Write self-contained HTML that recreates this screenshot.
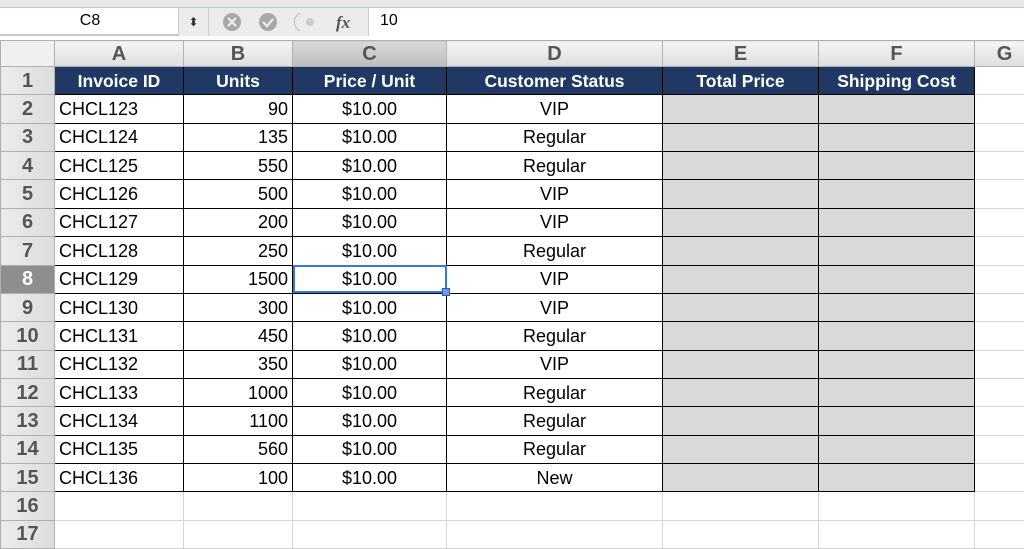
<!DOCTYPE html>
<html><head><meta charset="utf-8"><style>
*{margin:0;padding:0;box-sizing:border-box}
body{width:1024px;height:524px;overflow:hidden;background:#fff;font-family:"Liberation Sans",sans-serif;position:relative}
.top{position:absolute;left:0;top:0;width:1024px;height:8px;background:#e8e8e8;border-bottom:1px solid #b8cbb8}
.fb{position:absolute;left:0;top:8px;width:1024px;height:28px;background:#fff;border-bottom:2px solid #c8c8c8}
.fb .nm{position:absolute;left:60px;top:4px;width:60px;text-align:center;font-size:16px}
.fb .seg{position:absolute;top:0;height:28px;background:#ececec;border-left:1px solid #ccc}
.fb .v{position:absolute;left:380px;top:4px;font-size:16px}
table{position:absolute;left:0;top:40px;width:1034px;border-collapse:collapse;table-layout:fixed}
td{font-size:18px;padding:0 4px;white-space:nowrap;overflow:hidden;border:1px solid #d4d4d4;height:28.36px;line-height:24px}
tr.ch td{height:26px;background:linear-gradient(#f4f4f4,#dedede);border:1px solid #b0b0b0;text-align:center;font-weight:bold;color:#555;font-size:20px}
tr.ch td.sel{background:linear-gradient(#d8d8d8,#bdbdbd)}
td.rh{background:linear-gradient(90deg,#ececec,#dcdcdc);border:1px solid #b0b0b0;text-align:center;font-weight:bold;color:#555;font-size:20px;padding:0}
td.rh.sel{background:#8e8e8e;color:#fff}
tr.h td.d{background:#1f3864;color:#fff;font-weight:bold;text-align:center;border:1px solid #000;height:27px;font-size:17.5px}
td.d{border:1px solid #000}
.r{text-align:right}.c{text-align:center}
td.g{background:#d9d9d9;border:1px solid #000}
td.cur{outline:2px solid #3a78d8;outline-offset:-2px}
.handle{position:absolute;left:442px;top:288px;width:8px;height:8px;background:#6a9ae8;border:1px solid #2a5bb8}
</style></head><body>
<div class="top"></div>
<div class="fb">
<div class="nm">C8</div>
<div class="seg" style="left:178px;width:30px;font-size:12px;text-align:center;line-height:28px;color:#333">⬍</div>
<div class="seg" style="left:208px;width:160px"></div>
<svg style="position:absolute;left:220px;top:4px" width="150" height="22"><circle cx="12" cy="10" r="9" fill="#a8a8a8"/><path d="M8 6l8 8M16 6l-8 8" stroke="#eee" stroke-width="2.2"/><circle cx="48" cy="10" r="9" fill="#a8a8a8"/><path d="M43 10l4 4 6-7" stroke="#eee" stroke-width="2.2" fill="none"/><path d="M80 1a10 10 0 0 0 0 18" stroke="#bbb" fill="none"/><circle cx="90" cy="10" r="4" fill="#ccc"/><text x="116" y="16" font-family="Liberation Serif" font-style="italic" font-weight="bold" font-size="17" fill="#555">fx</text></svg>
<div class="seg" style="left:368px;width:656px;background:#fff"></div>
<div class="v">10</div>
</div>
<table>
<colgroup><col style="width:54px"><col style="width:129px"><col style="width:109px"><col style="width:154px"><col style="width:216px"><col style="width:156px"><col style="width:156px"><col style="width:60px"></colgroup>
<tr class="ch"><td style="background:#f0f0f0"></td><td>A</td><td>B</td><td class="sel">C</td><td>D</td><td>E</td><td>F</td><td>G</td></tr>
<tr class="h"><td class="rh">1</td><td class="d">Invoice ID</td><td class="d">Units</td><td class="d">Price / Unit</td><td class="d">Customer Status</td><td class="d">Total Price</td><td class="d">Shipping Cost</td><td></td></tr>
<tr><td class="rh">2</td><td class="d">CHCL123</td><td class="d r">90</td><td class="d c">$10.00</td><td class="d c">VIP</td><td class="g"></td><td class="g"></td><td></td></tr>
<tr><td class="rh">3</td><td class="d">CHCL124</td><td class="d r">135</td><td class="d c">$10.00</td><td class="d c">Regular</td><td class="g"></td><td class="g"></td><td></td></tr>
<tr><td class="rh">4</td><td class="d">CHCL125</td><td class="d r">550</td><td class="d c">$10.00</td><td class="d c">Regular</td><td class="g"></td><td class="g"></td><td></td></tr>
<tr><td class="rh">5</td><td class="d">CHCL126</td><td class="d r">500</td><td class="d c">$10.00</td><td class="d c">VIP</td><td class="g"></td><td class="g"></td><td></td></tr>
<tr><td class="rh">6</td><td class="d">CHCL127</td><td class="d r">200</td><td class="d c">$10.00</td><td class="d c">VIP</td><td class="g"></td><td class="g"></td><td></td></tr>
<tr><td class="rh">7</td><td class="d">CHCL128</td><td class="d r">250</td><td class="d c">$10.00</td><td class="d c">Regular</td><td class="g"></td><td class="g"></td><td></td></tr>
<tr><td class="rh sel">8</td><td class="d">CHCL129</td><td class="d r">1500</td><td class="d c cur">$10.00</td><td class="d c">VIP</td><td class="g"></td><td class="g"></td><td></td></tr>
<tr><td class="rh">9</td><td class="d">CHCL130</td><td class="d r">300</td><td class="d c">$10.00</td><td class="d c">VIP</td><td class="g"></td><td class="g"></td><td></td></tr>
<tr><td class="rh">10</td><td class="d">CHCL131</td><td class="d r">450</td><td class="d c">$10.00</td><td class="d c">Regular</td><td class="g"></td><td class="g"></td><td></td></tr>
<tr><td class="rh">11</td><td class="d">CHCL132</td><td class="d r">350</td><td class="d c">$10.00</td><td class="d c">VIP</td><td class="g"></td><td class="g"></td><td></td></tr>
<tr><td class="rh">12</td><td class="d">CHCL133</td><td class="d r">1000</td><td class="d c">$10.00</td><td class="d c">Regular</td><td class="g"></td><td class="g"></td><td></td></tr>
<tr><td class="rh">13</td><td class="d">CHCL134</td><td class="d r">1100</td><td class="d c">$10.00</td><td class="d c">Regular</td><td class="g"></td><td class="g"></td><td></td></tr>
<tr><td class="rh">14</td><td class="d">CHCL135</td><td class="d r">560</td><td class="d c">$10.00</td><td class="d c">Regular</td><td class="g"></td><td class="g"></td><td></td></tr>
<tr><td class="rh">15</td><td class="d">CHCL136</td><td class="d r">100</td><td class="d c">$10.00</td><td class="d c">New</td><td class="g"></td><td class="g"></td><td></td></tr>
<tr><td class="rh">16</td><td></td><td></td><td></td><td></td><td></td><td></td><td></td></tr>
<tr><td class="rh">17</td><td></td><td></td><td></td><td></td><td></td><td></td><td></td></tr>
</table>
<div class="handle"></div>
</body></html>
